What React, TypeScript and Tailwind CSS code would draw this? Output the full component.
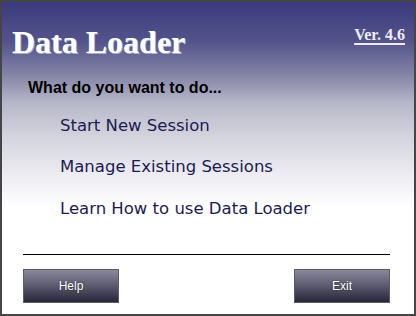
import React from 'react';

const menuItems = ['Start New Session', 'Manage Existing Sessions', 'Learn How to use Data Loader'];

const WizardButton: React.FC<{ label: string }> = ({ label }) => (
  <button
    type="button"
    className="w-[96px] h-[34px] border border-[#5c5b68] bg-gradient-to-b from-[#8a899c] via-[#5a596e] to-[#27263a] text-white text-[12px] [font-family:'Liberation_Sans',Arial,sans-serif] [text-shadow:0_0_2px_rgba(0,0,0,0.6)]"
  >
    {label}
  </button>
);

export default function App() {
  return (
    <div className="w-[416px] h-[316px] border-2 border-[#454545] bg-[linear-gradient(to_bottom,#3a3a7e_0px,#54548b_40px,#8787a8_75px,#b6b6c9_100px,#d4d4de_135px,#ececf1_172px,#ffffff_205px)] flex flex-col">
      <div className="flex items-start justify-between pt-[22px] pl-[10px] pr-[9px]">
        <h1 className="text-[32px] leading-[36px] font-bold text-white [font-family:'Liberation_Serif','Times_New_Roman',serif] [text-shadow:1px_1px_0_#9fb3d8]">
          Data Loader
        </h1>
        <span className="mt-[2px] text-[16px] leading-[18px] font-bold underline decoration-2 underline-offset-[3px] text-[#ececf4] [font-family:'Liberation_Serif','Times_New_Roman',serif]">
          Ver. 4.6
        </span>
      </div>

      <p className="mt-[18px] pl-[26px] text-[16px] leading-[20px] font-bold text-black [font-family:'Liberation_Sans',Arial,sans-serif]">
        What do you want to do...
      </p>

      <ul className="pl-[58px] mt-[18px] flex flex-col [font-family:'DejaVu_Sans',Verdana,sans-serif] text-[16.5px] leading-[20px] text-[#1b1b52]">
        <li>{menuItems[0]}</li>
        <li className="mt-[21px]">{menuItems[1]}</li>
        <li className="mt-[22px]">{menuItems[2]}</li>
      </ul>

      <div className="mt-[35px] ml-[21px] mr-[24px] h-px bg-black" />

      <div className="mt-[14px] ml-[21px] mr-[24px] flex justify-between">
        <WizardButton label="Help" />
        <WizardButton label="Exit" />
      </div>
    </div>
  );
}
